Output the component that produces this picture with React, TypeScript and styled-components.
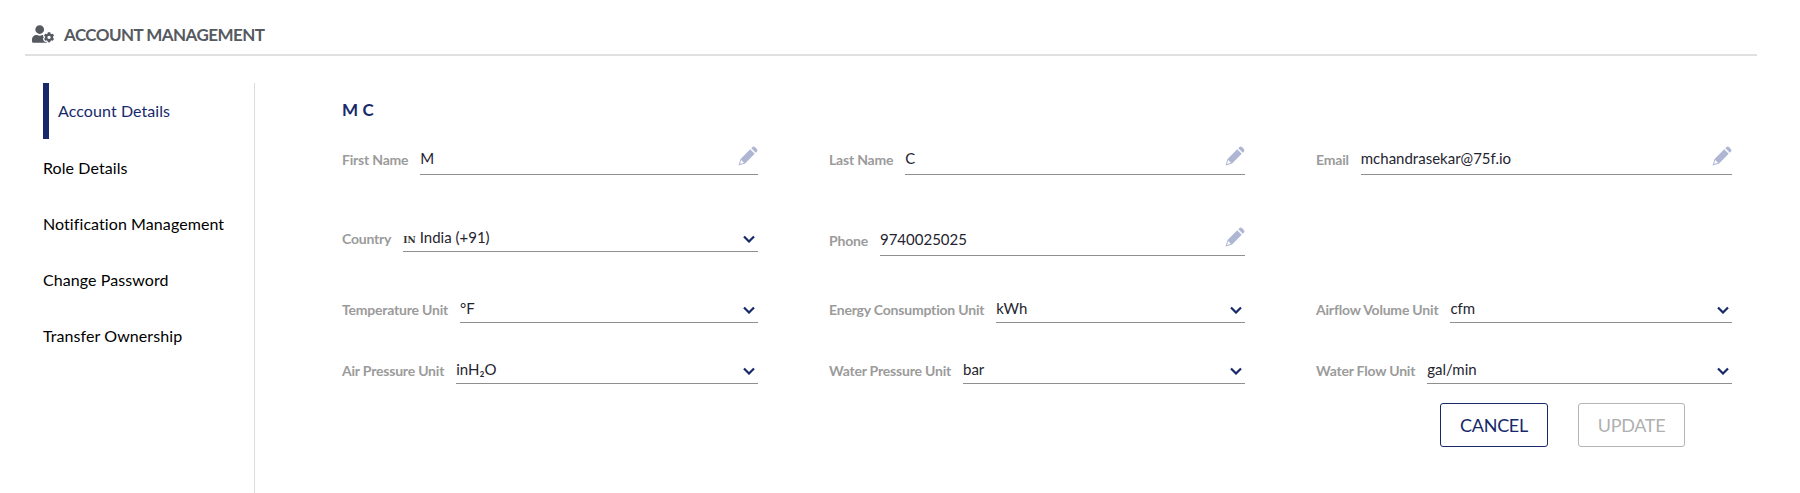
import React from "react";
import styled, { createGlobalStyle } from "styled-components";
import { FaUserCog } from "react-icons/fa";

type Field = {
  label: string;
  value?: string;
  kind?: "text" | "select";
  flag?: string;
  drop?: number;
};

type FormRow = {
  gap: number;
  fields: (Field | null)[];
};

const NAV_ITEMS = [
  "Account Details",
  "Role Details",
  "Notification Management",
  "Change Password",
  "Transfer Ownership",
];

const ROWS: FormRow[] = [
  {
    gap: 0,
    fields: [
      { label: "First Name", value: "M" },
      { label: "Last Name", value: "C" },
      { label: "Email", value: "mchandrasekar@75f.io" },
    ],
  },
  {
    gap: 49,
    fields: [
      { label: "Country", value: "India (+91)", kind: "select", flag: "IN" },
      { label: "Phone", value: "9740025025", drop: 4 },
      null,
    ],
  },
  {
    gap: 43,
    fields: [
      { label: "Temperature Unit", value: "°F", kind: "select" },
      { label: "Energy Consumption Unit", value: "kWh", kind: "select" },
      { label: "Airflow Volume Unit", value: "cfm", kind: "select" },
    ],
  },
  {
    gap: 33,
    fields: [
      { label: "Air Pressure Unit", value: "inH₂O", kind: "select" },
      { label: "Water Pressure Unit", value: "bar", kind: "select" },
      { label: "Water Flow Unit", value: "gal/min", kind: "select" },
    ],
  },
];

const GlobalStyle = createGlobalStyle`
  html, body {
    margin: 0;
    padding: 0;
    background: #fff;
    font-family: Lato, "Liberation Sans", sans-serif;
  }
`;

const Page = styled.div`
  width: 1800px;
  height: 493px;
  overflow: hidden;
  padding: 0 43px 0 25px;
  box-sizing: border-box;
  display: flex;
  flex-direction: column;
`;

const Header = styled.header`
  height: 56px;
  flex: none;
  box-sizing: border-box;
  border-bottom: 2px solid #e0e0e0;
  padding: 15px 0 0 7px;
  display: flex;
  align-items: center;
  gap: 10px;
  color: #555a60;
  font-size: 17px;
  font-weight: 700;
  letter-spacing: -0.55px;
  svg {
    width: 22px;
    height: 18px;
    margin-top: -2px;
  }
`;

const Body = styled.div`
  flex: 1;
  display: flex;
  padding: 27px 0 0 18px;
`;

const Sidebar = styled.nav`
  width: 212px;
  flex: none;
  box-sizing: border-box;
  border-right: 1px solid #dcdcdc;
`;

const NavItem = styled.div<{ $active?: boolean }>`
  height: 56px;
  display: flex;
  align-items: center;
  font-size: 16px;
  letter-spacing: 0.08px;
  color: ${(p) => (p.$active ? "#17296b" : "#000")};
  ${(p) =>
    p.$active &&
    `
    border-left: 6px solid #17296b;
    padding: 0 0 2px 9px;
    box-sizing: border-box;
  `}
`;

const Main = styled.main`
  flex: 1;
  padding: 17px 0 0 87px;
`;

const Name = styled.h2`
  margin: 0 0 22px;
  height: 25px;
  line-height: 20px;
  font-size: 17px;
  font-weight: 700;
  letter-spacing: 0.2px;
  color: #17296b;
`;

const Row = styled.div<{ $gap: number }>`
  display: grid;
  grid-template-columns: repeat(3, 416px);
  column-gap: 71px;
  margin-top: ${(p) => p.$gap}px;
`;

const FieldWrap = styled.div<{ $drop?: number }>`
  display: flex;
  align-items: flex-end;
  gap: 12px;
  height: 28px;
  transform: translateY(${(p) => p.$drop ?? 0}px);
`;

const Label = styled.label<{ $select: boolean }>`
  flex: none;
  font-size: 14px;
  font-weight: 700;
  letter-spacing: -0.2px;
  color: #9b9b9b;
  line-height: 18px;
  padding-bottom: ${(p) => (p.$select ? 4 : 6)}px;
`;

const Control = styled.div<{ $select: boolean }>`
  flex: 1;
  height: 28px;
  box-sizing: border-box;
  border-bottom: 1px solid #8f8f8f;
  display: flex;
  align-items: center;
  justify-content: space-between;
  padding-bottom: ${(p) => (p.$select ? 2 : 5)}px;
  color: #1f2430;
  font-size: 15px;
`;

const Value = styled.span`
  display: flex;
  align-items: baseline;
  gap: 4px;
`;

const Flag = styled.span`
  font-family: "DejaVu Serif", serif;
  font-weight: 700;
  font-size: 9px;
  color: #333;
`;

const Pencil = styled.svg`
  width: 20px;
  height: 20px;
  align-self: flex-start;
  margin-top: -1px;
  fill: #afb6d3;
`;

const Chevron = styled.svg`
  width: 12px;
  height: 8px;
  margin-right: 3px;
  margin-top: 5px;
  fill: none;
  stroke: #17296b;
  stroke-width: 2.2;
`;

const Actions = styled.div`
  margin-top: 19px;
  display: flex;
  justify-content: flex-end;
  gap: 30px;
  padding-right: 72px;
`;

const Button = styled.button<{ $disabled?: boolean }>`
  width: ${(p) => (p.$disabled ? 107 : 108)}px;
  height: 44px;
  border-radius: 3px;
  background: #fff;
  font-family: inherit;
  font-size: 18px;
  letter-spacing: -0.3px;
  border: 1px solid ${(p) => (p.$disabled ? "#b5b5b5" : "#17296b")};
  color: ${(p) => (p.$disabled ? "#b0b0b0" : "#17296b")};
`;

const PencilIcon = () => (
  <Pencil viewBox="0 0 20 20">
    <path d="M13.3 2.2l1-1c.8-.8 2-.8 2.8 0l1.7 1.7c.8.8.8 2 0 2.8l-1 1z" />
    <path d="M12.2 3.3l4.5 4.5-9.6 9.6-6.6 2.1 2.1-6.6zM3.2 14.1l-1.1 3.8 3.8-1.1z" fillRule="evenodd" />
  </Pencil>
);

const FormField = ({ label, value, kind, flag, drop }: Field) => {
  const select = kind === "select";
  return (
    <FieldWrap $drop={drop}>
      <Label $select={select}>{label}</Label>
      <Control $select={select}>
        <Value>
          {flag && <Flag>{flag}</Flag>}
          {value}
        </Value>
        {select ? (
          <Chevron viewBox="0 0 12 8">
            <path d="M1 1.5l5 5 5-5" />
          </Chevron>
        ) : (
          <PencilIcon />
        )}
      </Control>
    </FieldWrap>
  );
};

const App = () => {
  return (
    <Page>
      <GlobalStyle />
      <Header>
        <FaUserCog />
        ACCOUNT MANAGEMENT
      </Header>
      <Body>
        <Sidebar>
          {NAV_ITEMS.map((item, index) => (
            <NavItem key={item} $active={index === 0}>
              {item}
            </NavItem>
          ))}
        </Sidebar>
        <Main>
          <Name>M C</Name>
          {ROWS.map((row) => (
            <Row key={row.fields[0]?.label} $gap={row.gap}>
              {row.fields.map((field, index) =>
                field ? <FormField key={field.label} {...field} /> : <div key={index} />
              )}
            </Row>
          ))}
          <Actions>
            <Button>CANCEL</Button>
            <Button $disabled>UPDATE</Button>
          </Actions>
        </Main>
      </Body>
    </Page>
  );
};

export default App;
